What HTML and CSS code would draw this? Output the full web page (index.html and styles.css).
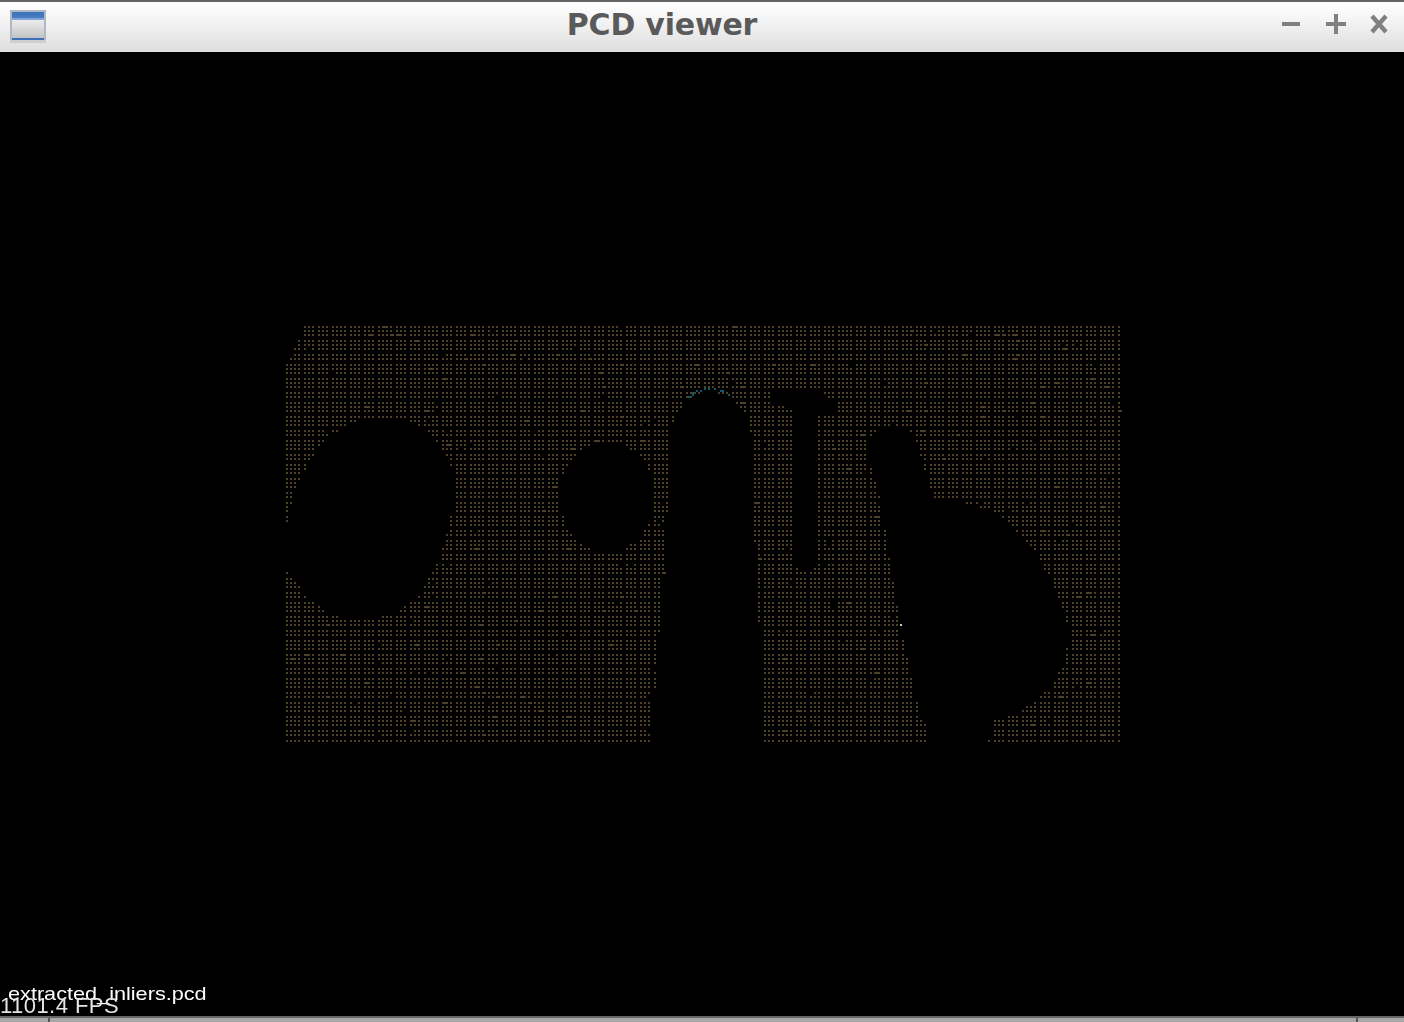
FILE: index.html
```html
<!DOCTYPE html>
<html lang="en">
<head>
<meta charset="utf-8">
<title>PCD viewer</title>
<link rel="stylesheet" href="styles.css">
</head>
<body>
<div class="window">
  <header class="titlebar">
    <div class="app-icon">
      <svg width="36" height="34" viewBox="0 0 36 34">
        <defs>
          <linearGradient id="iconBody" x1="0" y1="0" x2="0" y2="1">
            <stop offset="0" stop-color="#ececec"/>
            <stop offset="1" stop-color="#c4c4c4"/>
          </linearGradient>
          <linearGradient id="iconHead" x1="0" y1="0" x2="0" y2="1">
            <stop offset="0" stop-color="#3a72c0"/>
            <stop offset="1" stop-color="#4a7cc2"/>
          </linearGradient>
        </defs>
        <rect x="0" y="0" width="36" height="30" fill="#b0b8c4"/>
        <rect x="2" y="2" width="32" height="6" fill="url(#iconHead)"/>
        <rect x="2" y="8" width="32" height="2" fill="#7fa4d6"/>
        <rect x="2" y="10" width="32" height="18" fill="url(#iconBody)"/>
        <rect x="2" y="28" width="32" height="2" fill="#3f6fb8"/>
        <rect x="0" y="30" width="36" height="3" fill="#cfcfcf"/>
      </svg>
    </div>
    <h1 class="title">PCD viewer</h1>
    <div class="controls">
      <svg class="ctl-min" width="18" height="20" viewBox="0 0 18 20"><rect x="0" y="8" width="18" height="4" fill="#808080"/></svg>
      <svg class="ctl-max" width="20" height="20" viewBox="0 0 20 20"><rect x="0" y="8" width="20" height="4" fill="#808080"/><rect x="8" y="0" width="4" height="20" fill="#808080"/></svg>
      <svg width="18" height="20" viewBox="0 0 18 20"><path d="M2 2 L16 18 M16 2 L2 18" stroke="#808080" stroke-width="4.4" fill="none"/></svg>
    </div>
  </header>
  <main class="viewer">
    <canvas id="cloud" class="cloud" width="1404" height="964"></canvas>
    <span class="label-file">extracted_inliers.pcd</span>
    <span class="label-fps">1101.4 FPS</span>
  </main>
  <footer class="frame-bottom">
    <i class="notch notch-left"></i>
    <i class="notch notch-right"></i>
  </footer>
</div>
<script src="cloud.js"></script>
</body>
</html>
```
FILE: styles.css
```css
* { box-sizing: border-box; }
html, body { margin: 0; padding: 0; background: #000; overflow: hidden; }
.window { width: 1404px; height: 1022px; display: flex; flex-direction: column; }
.titlebar {
  height: 52px;
  flex: none;
  display: flex;
  align-items: center;
  border-top: 2px solid #646464;
  background: linear-gradient(#ffffff, #f6f6f6 30%, #dedede);
}
.app-icon { width: 54px; flex: none; padding-left: 10px; display: flex; align-items: center; }
.app-icon svg { display: block; }
.title {
  flex: 1;
  margin: 0 0 4px;
  text-align: center;
  font: bold 30px/1 "DejaVu Sans", sans-serif;
  letter-spacing: -0.2px;
  color: #5a5a5a;
}
.controls {
  width: 134px;
  flex: none;
  display: flex;
  align-items: center;
  padding: 0 0 6px 12px;
}
.controls svg { display: block; }
.ctl-min { margin-right: 26px; }
.ctl-max { margin-right: 24px; }
.viewer { position: relative; flex: 1; background: #000; overflow: hidden; }
.cloud { display: block; }
.label-file, .label-fps {
  position: absolute;
  font-family: "Liberation Sans", Arial, sans-serif;
  color: #fff;
  white-space: nowrap;
  line-height: 1;
}
.label-file { left: 8px; top: 932px; font-size: 19px; transform: scaleX(1.14); transform-origin: left; }
.label-fps { left: 0; top: 943px; font-size: 22px; letter-spacing: 0.45px; color: #e4e4e4; }
.frame-bottom {
  position: relative;
  height: 6px;
  flex: none;
  background: #a8a8a8;
  border-top: 2px solid #666;
}
.notch { position: absolute; top: 0; bottom: 0; width: 2px; background: #555; }
.notch-left { left: 48px; }
.notch-right { left: 1356px; }
```
FILE: cloud.js
```js
var canvas = document.getElementById('cloud');
var ctx = canvas.getContext('2d');

var holes = [
  'M380 417 C425 417 455 450 454 490 C452 530 438 570 420 592 C405 610 385 620 360 620 C330 620 305 600 290 572 L280 572 L280 522 L288 522 C295 470 330 417 380 417 Z',
  'M607 442 C633 442 654 466 654 497 C654 528 633 552 607 552 C581 552 560 528 560 497 C560 466 581 442 607 442 Z',
  'M710 392 C735 392 752 415 752 445 L753 500 L765 750 L651 750 L668 500 L670 440 C672 415 688 392 710 392 Z',
  'M771 391 L815 390 C828 393 838 404 840 417 L818 412 L816 425 L816 565 Q805 578 796 565 L797 425 L795 408 L771 405 Z',
  'M893 425 C908 425 918 437 919 452 L934 503 L965 503 C1000 508 1030 540 1050 580 C1062 605 1068 620 1068 635 C1068 675 1040 708 995 720 L986 750 L934 750 L917 700 L905 650 L897 605 L880 500 L869 458 C866 440 878 425 893 425 Z'
].map(function (d) { return new Path2D(d); });

var outline = new Path2D('M307 320 L1124 320 L1124 746 L282 746 L282 375 Z');

function hash(a, b) {
  var h = (a * 73856093) ^ (b * 19349663);
  h = (h ^ (h >>> 13)) * 1274126177;
  return ((h ^ (h >>> 16)) >>> 0) % 1000;
}

function inside(x, y) {
  if (!ctx.isPointInPath(outline, x, y)) return false;
  for (var k = 0; k < holes.length; k++) {
    if (ctx.isPointInPath(holes[k], x, y)) return false;
  }
  return true;
}

// Hit tests run untransformed with the paths in page coordinates; drawing is then shifted by the title bar.
var dots = [];
for (var r = 0; r <= 87; r++) {
  var y = 326 + 2 * Math.floor(r * 2.38);
  for (var c = 0; c <= 181; c++) {
    var x = 286 + 2 * Math.floor(c * 2.3);
    var n = hash(c, r);
    if (n < 8) continue;
    if (inside(x + 1, y + 1)) dots.push([x, y, n]);
  }
}

ctx.setTransform(1, 0, 0, 1, 0, -52);
ctx.fillStyle = '#4e4128';
dots.forEach(function (d) {
  var w = d[2] < 20 ? 4 : 2;
  ctx.fillRect(d[0], d[1], w, 2);
});

ctx.fillStyle = '#0f5a6e';
[[688,396],[692,394],[692,392],[696,390],[700,390],[704,388],[708,388],[714,388],[720,390],[722,390],[728,394]].forEach(function (p) {
  ctx.fillRect(p[0], p[1], 2, 2);
});
ctx.fillStyle = '#c8c8c8';
ctx.fillRect(900, 624, 2, 2);
```
